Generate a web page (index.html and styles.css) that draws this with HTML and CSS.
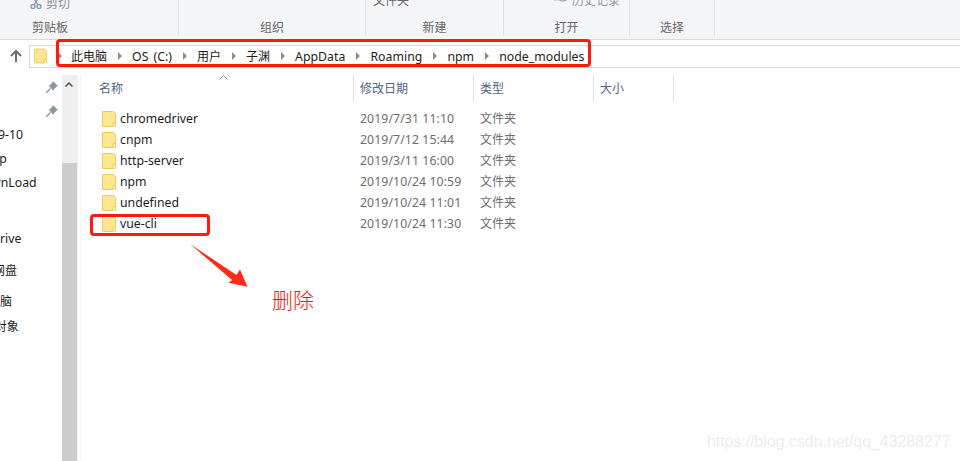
FILE: index.html
```html
<!DOCTYPE html>
<html lang="zh">
<head>
<meta charset="utf-8">
<title>node_modules</title>
<link rel="stylesheet" href="styles.css">
</head>
<body>
<svg class="defs" width="0" height="0" aria-hidden="true">
  <symbol id="folder" viewBox="0 0 14 16">
    <path d="M1 .5h10l2.500 2v12.500a.5.5 0 0 1-.5.5H1a.5.5 0 0 1-.5-.5V1a.5.5 0 0 1 .5-.5z" fill="#ffe690" stroke="#eccb5e"/>
    <path d="M11 15.500v-4h2.500v4" fill="#fff3c4" stroke="#eccb5e"/>
  </symbol>
</svg>
<div class="window">
  <header class="ribbon">
    <section class="group group-clip">
      <div class="tool tool-cut">
        <svg class="tool-icon" width="12" height="12" viewBox="0 0 12 12"><path d="M3 0l5 8M9 0L4 8" fill="none" stroke="#8d9098" stroke-width="1.200"/><circle cx="3" cy="9.500" r="2" fill="none" stroke="#7f9ac4" stroke-width="1.400"/><circle cx="9" cy="9.500" r="2" fill="none" stroke="#7f9ac4" stroke-width="1.400"/></svg>
        <span>剪切</span>
      </div>
      <div class="label">剪贴板</div>
    </section>
    <section class="group group-org">
      <div class="label">组织</div>
    </section>
    <section class="group group-new">
      <div class="tool tool-folder"><span>文件夹</span></div>
      <div class="label">新建</div>
    </section>
    <section class="group group-open">
      <div class="tool tool-history">
        <svg class="tool-icon" width="15" height="12" viewBox="0 0 15 12"><rect x="0" y="0" width="9" height="7" fill="#d5d9e2"/><circle cx="9" cy="2" r="5" fill="#eef1f6" stroke="#8fa3c0" stroke-width="1.200"/><path d="M9 0v2.500h2" fill="none" stroke="#8fa3c0"/></svg>
        <span>历史记录</span>
      </div>
      <div class="label">打开</div>
    </section>
    <section class="group group-select">
      <div class="label">选择</div>
    </section>
  </header>

  <nav class="address-row">
    <svg class="up" width="14" height="14" viewBox="0 0 14 14"><path d="M7 13V2M2 7l5-5 5 5" fill="none" stroke="#6f6f6f" stroke-width="2"/></svg>
    <div class="address">
      <svg class="address-folder" width="13" height="16"><use href="#folder"/></svg>
      <span class="crumb-arrow first"></span>
      <span class="crumb cjk">此电脑</span><span class="crumb-arrow"></span>
      <span class="crumb">OS (C:)</span><span class="crumb-arrow"></span>
      <span class="crumb cjk">用户</span><span class="crumb-arrow"></span>
      <span class="crumb cjk">子渊</span><span class="crumb-arrow"></span>
      <span class="crumb">AppData</span><span class="crumb-arrow"></span>
      <span class="crumb">Roaming</span><span class="crumb-arrow"></span>
      <span class="crumb">npm</span><span class="crumb-arrow"></span>
      <span class="crumb">node_modules</span>
    </div>
  </nav>

  <main class="main">
    <aside class="sidebar">
      <div class="pin-row">
        <svg width="12" height="12" viewBox="0 0 12 12"><path d="M7 0L12 5L10.600 5.600L8 8.500L7.500 10L2.500 4.500L4 4L6.400 1.400ZM4 7L5 8L1 12L0 12L0 11Z" fill="#8f979f"/></svg>
      </div>
      <div class="pin-row">
        <svg width="12" height="12" viewBox="0 0 12 12"><path d="M7 0L12 5L10.600 5.600L8 8.500L7.500 10L2.500 4.500L4 4L6.400 1.400ZM4 7L5 8L1 12L0 12L0 11Z" fill="#8f979f"/></svg>
      </div>
      <ul class="nav-list">
        <li class="nav nav-date">2019-10</li>
        <li class="nav nav-app">App</li>
        <li class="nav nav-down">DownLoad</li>
        <li class="nav nav-drive">OneDrive</li>
        <li class="nav nav-pan">百度网盘</li>
        <li class="nav nav-pc">此电脑</li>
        <li class="nav nav-3d">3D 对象</li>
      </ul>
    </aside>
    <div class="scrollbar">
      <svg class="scroll-up" width="8" height="5" viewBox="0 0 8 5"><path d="M.5 4.500L4 1l3.500 3.500" fill="none" stroke="#505050" stroke-width="1.500"/></svg>
      <div class="scroll-thumb"></div>
    </div>
    <section class="list">
      <div class="row head">
        <div class="h h-name">名称<svg class="sort" width="9" height="5" viewBox="0 0 9 5"><path d="M.5 4.500L4.500.5l4 4" fill="none" stroke="#8a8a8a"/></svg></div>
        <div class="h">修改日期</div>
        <div class="h">类型</div>
        <div class="h">大小</div>
      </div>
      <div class="rows">
        <div class="row item"><div class="name"><svg width="14" height="16"><use href="#folder"/></svg>chromedriver</div><div class="cell">2019/7/31 11:10</div><div class="cell cjk">文件夹</div></div>
        <div class="row item"><div class="name"><svg width="14" height="16"><use href="#folder"/></svg>cnpm</div><div class="cell">2019/7/12 15:44</div><div class="cell cjk">文件夹</div></div>
        <div class="row item"><div class="name"><svg width="14" height="16"><use href="#folder"/></svg>http-server</div><div class="cell">2019/3/11 16:00</div><div class="cell cjk">文件夹</div></div>
        <div class="row item"><div class="name"><svg width="14" height="16"><use href="#folder"/></svg>npm</div><div class="cell">2019/10/24 10:59</div><div class="cell cjk">文件夹</div></div>
        <div class="row item"><div class="name"><svg width="14" height="16"><use href="#folder"/></svg>undefined</div><div class="cell">2019/10/24 11:01</div><div class="cell cjk">文件夹</div></div>
        <div class="row item"><div class="name"><svg width="14" height="16"><use href="#folder"/></svg>vue-cli</div><div class="cell">2019/10/24 11:30</div><div class="cell cjk">文件夹</div></div>
      </div>
    </section>
  </main>

  <div class="mark mark-path"></div>
  <div class="mark mark-item"></div>
  <svg class="arrow" width="60" height="46" viewBox="0 0 60 46"><path d="M0 0L46.500 31L50 25.500L57.500 42.700L38.500 38.700L42 36Z" fill="#ff2a1a"/></svg>
  <div class="delete-note">删除</div>
  <div class="watermark">https://blog.csdn.net/qq_43288277</div>
</div>
</body>
</html>
```

FILE: styles.css
```css
* { box-sizing: border-box; }
html, body { margin: 0; padding: 0; background: #fff; }
body { width: 960px; height: 461px; overflow: hidden; font-family: "Noto Sans", "Noto Sans CJK SC", sans-serif; font-size: 12.25px; }
.defs { position: absolute; }
.window { position: relative; width: 960px; height: 461px; overflow: hidden; display: flex; flex-direction: column; }

.ribbon { height: 40px; flex: none; display: flex; background: #f4f5f7; border-bottom: 1px solid #d9d9d9; padding-bottom: 3px; overflow: hidden; }
.group { height: 36px; border-right: 1px solid #e0e1e3; display: flex; flex-direction: column; align-items: center; }
.group-clip { width: 179px; align-items: flex-start; padding-left: 32px; }
.group-org { width: 187px; }
.group-new { width: 138px; }
.group-open { width: 126px; }
.group-select { width: 85px; }
.tool { height: 20px; display: flex; align-items: center; gap: 5px; color: #8c8c8c; font-size: 12px; white-space: nowrap; flex: none; }
.tool-cut { margin: -7px 0 0 -2px; gap: 4px; }
.tool-folder { margin-top: -10px; color: #666; align-self: flex-start; padding-left: 7px; }
.tool-history { margin-top: -10px; color: #999; align-self: flex-start; padding-left: 50px; gap: 3px; }
.tool-icon { flex: none; }
.label { margin-top: auto; height: 16px; line-height: 16px; color: #666; font-size: 12px; }

.address-row { height: 29px; flex: none; padding-top: 5px; display: flex; align-items: flex-start; }
.up { margin: 4px 6px 0 9px; flex: none; }
.address { flex: 1; height: 23px; border: 1px solid #d9d9d9; border-right: 0; display: flex; align-items: center; padding: 0 0 1px 4px; color: #1c1c1c; white-space: nowrap; }
.address-folder { flex: none; }
.crumb { letter-spacing: .05px; word-spacing: 1.8px; }
.crumb-arrow { width: 25px; height: 8px; flex: none; position: relative; }
.crumb-arrow::after { content: ""; position: absolute; left: 11px; top: 0; border-left: 4px solid #8f8f8f; border-top: 4px solid transparent; border-bottom: 4px solid transparent; }
.crumb-arrow.first { width: 24px; }

.main { flex: 1; min-height: 0; display: flex; padding-top: 6px; }
.sidebar { width: 62px; flex: none; overflow: hidden; padding-top: 4px; }
.pin-row { height: 24px; display: flex; justify-content: flex-end; padding: 2px 4px 0 0; }
.nav-list { list-style: none; margin: 0; padding: 0; color: #1c1c1c; white-space: nowrap; }
.nav { height: 24px; line-height: 24px; }
.nav-date { margin: -4px 0 0 -23px; }
.nav-app { margin-left: -16px; }
.nav-down { margin-left: -25px; }
.nav-drive { margin: 32px 0 0 -33px; }
.nav-pan { margin: 8px 0 0 -31px; font-size: 12px; }
.nav-pc { margin: 7px 0 0 -24px; font-size: 12px; }
.nav-3d { margin: 1px 0 0 -24px; font-size: 12px; }

.scrollbar { width: 16px; flex: none; background: #efefef; border-right: 1px solid #f0f0f0; display: flex; flex-direction: column; }
.scroll-up { flex: none; margin: 7px 0 0 3px; }
.scroll-thumb { flex: 1; width: 15px; margin-top: 76px; background: #cdcdcd; }

.list { flex: 1; margin-left: 2px; border-left: 1px solid #f5f5f5; }
.row { display: grid; grid-template-columns: 273px 120px 120px 80px; }
.head { height: 27px; color: #51657f; font-size: 12px; }
.h { border-right: 1px solid #e3e3e3; padding: 5px 0 0 6px; position: relative; line-height: 17px; }
.h-name { padding-left: 18px; }
.sort { position: absolute; left: 138px; top: 0; }
.rows { padding-top: 6px; }
.item { height: 21px; line-height: 21px; color: #6d6d6d; }
.name { display: flex; align-items: center; gap: 4px; padding-left: 21px; color: #1c1c1c; }
.name svg { flex: none; }
.cell { padding-left: 6px; letter-spacing: .1px; }
.cjk { font-size: 12px; letter-spacing: 0; }

.mark { position: absolute; border: 3px solid #ff1a0e; border-radius: 4px; }
.mark-path { left: 56px; top: 39px; width: 535px; height: 28px; }
.mark-item { left: 90px; top: 214px; width: 120px; height: 22px; }
.arrow { position: absolute; left: 190px; top: 244px; }
.delete-note { position: absolute; left: 272px; top: 284px; color: #ff1208; font-size: 21px; line-height: 30px; font-weight: 300; font-family: "Noto Sans CJK SC", sans-serif; }
.watermark { position: absolute; left: 707px; top: 433px; font-family: "Liberation Sans", sans-serif; font-size: 16px; letter-spacing: -.06px; line-height: 18px; color: #ececec; white-space: nowrap; filter: blur(.4px); }
```
